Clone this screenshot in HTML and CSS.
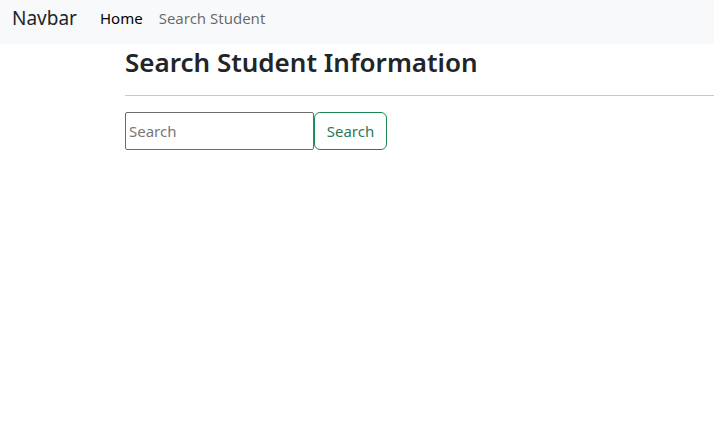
FILE: index.html
```html
<!DOCTYPE html>
<html lang="en">
<head>
<meta charset="utf-8">
<title>Search Student</title>
<link rel="stylesheet" href="styles.css">
</head>
<body>
<nav class="navbar">
  <a class="brand" href="#">Navbar</a>
  <ul class="nav-links">
    <li><a class="nav-link active" href="#">Home</a></li>
    <li><a class="nav-link" href="#">Search Student</a></li>
  </ul>
</nav>
<main class="content">
  <h2 class="title">Search Student Information</h2>
  <hr class="divider">
  <form class="search-form">
    <input class="search-input" type="text" placeholder="Search">
    <button class="search-btn" type="button">Search</button>
  </form>
</main>
</body>
</html>
```
FILE: styles.css
```css
* { box-sizing: border-box; }
body {
  margin: 0;
  font-family: "Noto Sans", "Open Sans", sans-serif;
  color: #212529;
  background: #fff;
}
.navbar {
  display: flex;
  align-items: center;
  height: 44px;
  padding: 0 12px 9px;
  background: #f8f9fa;
}
.brand {
  font-size: 19px;
  color: #212529;
  text-decoration: none;
  margin-right: 23px;
}
.nav-links {
  display: flex;
  list-style: none;
  margin: 0;
  padding: 0;
  gap: 16px;
}
.nav-link {
  font-size: 15px;
  color: rgba(0,0,0,.6);
  text-decoration: none;
}
.nav-link.active { color: #000; }
.content {
  padding-left: 125px;
}
.title {
  margin: 1px 0 0;
  font-size: 26px;
  font-weight: 600;
  line-height: 34px;
}
.divider {
  margin: 16px 0 16px;
  border: 0;
  border-top: 1px solid #c8c9ca;
}
.search-form {
  display: flex;
}
.search-input {
  width: 189px;
  height: 38px;
  border: 1px solid #6c6c6c;
  border-radius: 2px;
  padding: 0 3px;
  font-family: inherit;
  font-size: 15px;
  color: #212529;
}
.search-input::placeholder { color: #777; }
.search-btn {
  width: 73px;
  height: 38px;
  border: 1px solid #198754;
  border-radius: 6px;
  background: #fff;
  color: #2b7a55;
  font-family: inherit;
  font-size: 15px;
  padding: 0;
}
```
